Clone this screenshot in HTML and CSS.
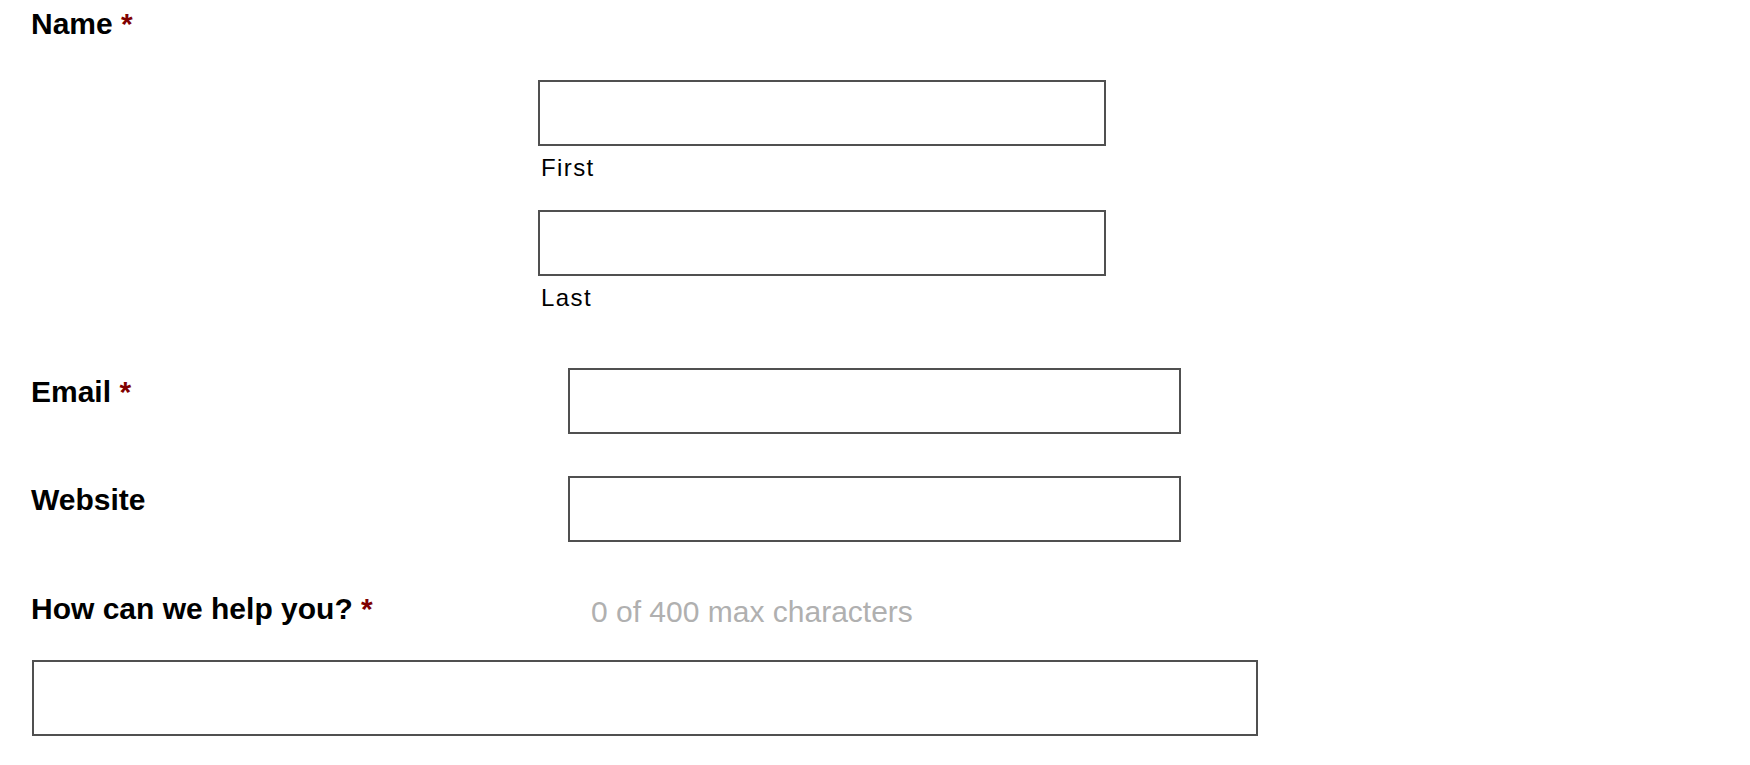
FILE: index.html
```html
<!DOCTYPE html>
<html lang="en">
<head>
<meta charset="utf-8">
<title>Contact form</title>
<link rel="stylesheet" href="styles.css">
</head>
<body>
<form class="form">
  <div class="field field-name">
    <div class="label">Name <span class="req">*</span></div>
    <div class="name-group">
      <div class="name-part">
        <input class="input input-name" type="text" id="first">
        <label class="sublabel" for="first">First</label>
      </div>
      <div class="name-part">
        <input class="input input-name" type="text" id="last">
        <label class="sublabel" for="last">Last</label>
      </div>
    </div>
  </div>

  <div class="field row row-email">
    <label class="label label-side" for="email">Email <span class="req">*</span></label>
    <input class="input input-wide" type="email" id="email">
  </div>

  <div class="field row row-website">
    <label class="label label-side" for="website">Website</label>
    <input class="input input-wide" type="url" id="website">
  </div>

  <div class="field message">
    <div class="message-head">
      <label class="label" for="msg">How can we help you? <span class="req">*</span></label>
      <span class="counter">0 of 400 max characters</span>
    </div>
    <textarea class="textarea" id="msg"></textarea>
  </div>
</form>
</body>
</html>
```
FILE: styles.css
```css
html, body {
  margin: 0;
  background: #ffffff;
}

body {
  font-family: "Liberation Sans", Arial, Helvetica, sans-serif;
  color: #000000;
}

.form {
  padding: 7px 0 0 31px;
}

.label {
  display: block;
  font-weight: bold;
  font-size: 30px;
  line-height: 34px;
}

.req {
  color: #800000;
}

.name-group {
  margin: 39px 0 0 507px;
  display: flex;
  flex-direction: column;
  gap: 28px;
}

.name-part {
  display: flex;
  flex-direction: column;
  gap: 8px;
}

.input {
  box-sizing: border-box;
  display: block;
  height: 66px;
  margin: 0;
  padding: 0 10px;
  border: 2px solid #505050;
  border-radius: 0;
  background: #ffffff;
  font: inherit;
  outline: none;
}

.input-name {
  width: 568px;
}

.input-wide {
  width: 613px;
}

.sublabel {
  display: block;
  font-size: 24px;
  line-height: 28px;
  letter-spacing: 1.4px;
  padding-left: 3px;
}

.row {
  display: grid;
  grid-template-columns: 537px 613px;
  align-items: start;
}

.label-side {
  padding-top: 7px;
}

.row-email {
  margin-top: 56px;
}

.row-website {
  margin-top: 42px;
}

.message {
  margin-top: 50px;
}

.message-head {
  display: grid;
  grid-template-columns: 560px auto;
  align-items: start;
}

.counter {
  display: block;
  padding-top: 3px;
  font-size: 30px;
  line-height: 34px;
  color: #b0b0b0;
}

.textarea {
  box-sizing: border-box;
  display: block;
  width: 1226px;
  height: 76px;
  margin: 31px 0 0 1px;
  padding: 8px 10px;
  border: 2px solid #505050;
  border-radius: 0;
  background: #ffffff;
  font: inherit;
  resize: none;
  outline: none;
}
```
